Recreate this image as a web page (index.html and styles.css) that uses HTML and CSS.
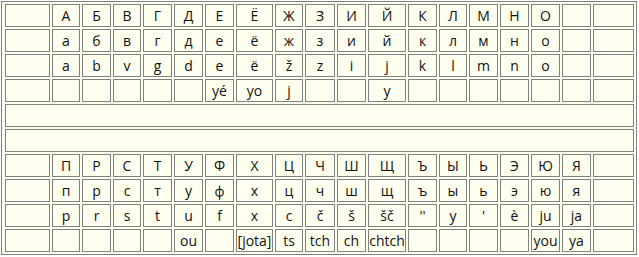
FILE: index.html
```html
<!DOCTYPE html>
<html lang="ru">
<head>
<meta charset="utf-8">
<title>Alphabet</title>
<link rel="stylesheet" href="styles.css">
</head>
<body>
<div class="chart">
  <div class="c"></div><div class="c">А</div><div class="c">Б</div><div class="c">В</div><div class="c">Г</div><div class="c">Д</div><div class="c">Е</div><div class="c">Ё</div><div class="c">Ж</div><div class="c">З</div><div class="c">И</div><div class="c">Й</div><div class="c">К</div><div class="c">Л</div><div class="c">М</div><div class="c">Н</div><div class="c">О</div><div class="c"></div><div class="c"></div>

  <div class="c"></div><div class="c">а</div><div class="c">б</div><div class="c">в</div><div class="c">г</div><div class="c">д</div><div class="c">е</div><div class="c">ё</div><div class="c">ж</div><div class="c">з</div><div class="c">и</div><div class="c">й</div><div class="c">к</div><div class="c">л</div><div class="c">м</div><div class="c">н</div><div class="c">о</div><div class="c"></div><div class="c"></div>

  <div class="c"></div><div class="c">a</div><div class="c">b</div><div class="c">v</div><div class="c">g</div><div class="c">d</div><div class="c">e</div><div class="c">ë</div><div class="c">ž</div><div class="c">z</div><div class="c">i</div><div class="c">j</div><div class="c">k</div><div class="c">l</div><div class="c">m</div><div class="c">n</div><div class="c">o</div><div class="c"></div><div class="c"></div>

  <div class="c"></div><div class="c"></div><div class="c"></div><div class="c"></div><div class="c"></div><div class="c"></div><div class="c">yé</div><div class="c">yo</div><div class="c">j</div><div class="c"></div><div class="c"></div><div class="c">y</div><div class="c"></div><div class="c"></div><div class="c"></div><div class="c"></div><div class="c"></div><div class="c"></div><div class="c"></div>

  <div class="c full"></div>
  <div class="c full"></div>

  <div class="c"></div><div class="c">П</div><div class="c">Р</div><div class="c">С</div><div class="c">Т</div><div class="c">У</div><div class="c">Ф</div><div class="c">Х</div><div class="c">Ц</div><div class="c">Ч</div><div class="c">Ш</div><div class="c">Щ</div><div class="c">Ъ</div><div class="c">Ы</div><div class="c">Ь</div><div class="c">Э</div><div class="c">Ю</div><div class="c">Я</div><div class="c"></div>

  <div class="c"></div><div class="c">п</div><div class="c">р</div><div class="c">с</div><div class="c">т</div><div class="c">у</div><div class="c">ф</div><div class="c">х</div><div class="c">ц</div><div class="c">ч</div><div class="c">ш</div><div class="c">щ</div><div class="c">ъ</div><div class="c">ы</div><div class="c">ь</div><div class="c">э</div><div class="c">ю</div><div class="c">я</div><div class="c"></div>

  <div class="c"></div><div class="c">p</div><div class="c">r</div><div class="c">s</div><div class="c">t</div><div class="c">u</div><div class="c">f</div><div class="c">x</div><div class="c">c</div><div class="c">č</div><div class="c">š</div><div class="c">šč</div><div class="c">''</div><div class="c">y</div><div class="c">'</div><div class="c">è</div><div class="c">ju</div><div class="c">ja</div><div class="c"></div>

  <div class="c"></div><div class="c"></div><div class="c"></div><div class="c"></div><div class="c"></div><div class="c">ou</div><div class="c"></div><div class="c">[jota]</div><div class="c">ts</div><div class="c">tch</div><div class="c">ch</div><div class="c">chtch</div><div class="c"></div><div class="c"></div><div class="c"></div><div class="c"></div><div class="c">you</div><div class="c">ya</div><div class="c"></div>
</div>
</body>
</html>
```
FILE: styles.css
```css
html, body {
  margin: 0;
  padding: 0;
  background: #ffffff;
}

body {
  font-family: "Open Sans", "DejaVu Sans", sans-serif;
  font-size: 14px;
  color: #111111;
}

.chart {
  display: grid;
  grid-template-columns: 45px 28px 29px 28px 29px 29px 29px 37px 28px 30px 29px 38px 29px 28px 29px 29px 29px 29px 41px;
  grid-auto-rows: 23px;
  gap: 2px;
  width: max-content;
  margin: 1px 0 0 1px;
  padding: 2px 2px 2px 3px;
  border: 1px solid #808080;
  background: #fffff0;
}

.c {
  box-sizing: border-box;
  border: 1px solid #808080;
  line-height: 21px;
  text-align: center;
  white-space: nowrap;
  overflow: hidden;
}

.full {
  grid-column: 1 / -1;
}
```
